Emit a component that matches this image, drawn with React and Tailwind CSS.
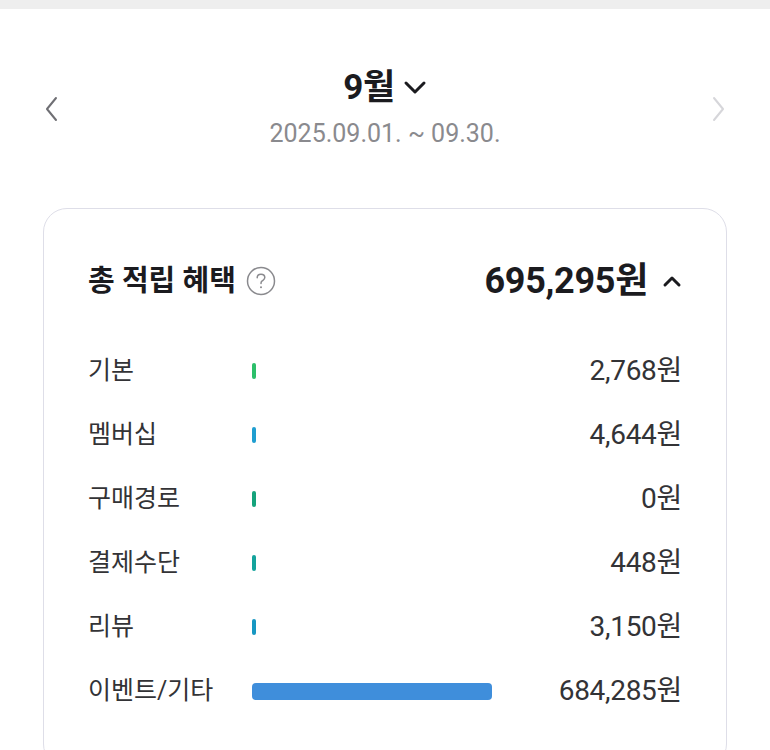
import React from 'react';

const rows = [
    { label: '기본', value: '2,768원', color: 'bg-[#2cbf6a]', width: 4 },
    { label: '멤버십', value: '4,644원', color: 'bg-[#1f9ed0]', width: 4 },
    { label: '구매경로', value: '0원', color: 'bg-[#15a37c]', width: 4 },
    { label: '결제수단', value: '448원', color: 'bg-[#14a39c]', width: 4 },
    { label: '리뷰', value: '3,150원', color: 'bg-[#1797c2]', width: 4 },
    { label: '이벤트/기타', value: '684,285원', color: 'bg-[#3f8edb]', width: 240 },
];

const App = () => {
    return (
        <div className="min-h-screen bg-white font-['Roboto','Noto_Sans_CJK_KR',sans-serif] text-[#1b1b1f]">
            {/* Top strip */}
            <div className="h-[9px] bg-[#eeeeee]" />

            {/* Month selector */}
            <header className="flex items-center justify-between px-[38px] pt-[59px]">
                <button className="p-1">
                    <svg width="20" height="28" viewBox="0 0 20 28" fill="none" stroke="#6f6f74" strokeWidth="2" strokeLinecap="round" strokeLinejoin="round">
                        <path d="M14 3 L5 14 L14 25" />
                    </svg>
                </button>
                <div className="flex flex-col items-center">
                    <div className="flex items-center gap-[8px]">
                        <span className="text-[35px] font-bold leading-[40px] tracking-[-0.5px]">9월</span>
                        <svg width="24" height="16" viewBox="0 0 24 16" fill="none" stroke="#1b1b1f" strokeWidth="3" strokeLinecap="round" strokeLinejoin="round">
                            <path d="M3 3 L12 12 L21 3" />
                        </svg>
                    </div>
                    <span className="mt-[11px] text-[25px] leading-[30px] text-[#8a8a8e]">2025.09.01. ~ 09.30.</span>
                </div>
                <button className="p-1">
                    <svg width="20" height="28" viewBox="0 0 20 28" fill="none" stroke="#d6d6da" strokeWidth="2" strokeLinecap="round" strokeLinejoin="round">
                        <path d="M6 3 L15 14 L6 25" />
                    </svg>
                </button>
            </header>

            {/* Benefit card */}
            <main className="mx-[43px] mt-[59px] rounded-[24px] border-[1.5px] border-[#dedee8] px-[44px] pt-[48px] pb-[60px]">
                <div className="flex items-center justify-between">
                    <div className="flex items-center gap-[10px]">
                        <h2 className="text-[29px] font-bold leading-[48px]">총 적립 혜택</h2>
                        <svg width="30" height="30" viewBox="0 0 30 30" fill="none">
                            <circle cx="15" cy="15" r="13.5" stroke="#8a8a8e" strokeWidth="1.5" />
                            <path d="M11.2 11.8 C11.2 9.6 13 8.2 15 8.2 C17.2 8.2 18.8 9.6 18.8 11.6 C18.8 13.6 17 14.2 15.8 15.2 C15.2 15.7 15 16.3 15 17.4" stroke="#8a8a8e" strokeWidth="1.5" strokeLinecap="round" />
                            <circle cx="15" cy="21.2" r="1" fill="#8a8a8e" />
                        </svg>
                    </div>
                    <div className="flex items-center gap-[14px]">
                        <span className="text-[36px] font-bold leading-[48px] tracking-[-0.3px]">695,295원</span>
                        <svg width="20" height="14" viewBox="0 0 20 14" fill="none" stroke="#1b1b1f" strokeWidth="3" strokeLinecap="round" strokeLinejoin="round">
                            <path d="M3 11 L10 4 L17 11" />
                        </svg>
                    </div>
                </div>

                <ul className="mt-[50px] flex flex-col gap-[32px]">
                    {rows.map((row) => (
                        <li key={row.label} className="flex items-center h-[32px]">
                            <span className="w-[164px] shrink-0 text-[25px] text-[#333336]">{row.label}</span>
                            <div className="flex-1 flex items-center">
                                <div
                                    className={`${row.color} ${row.width > 4 ? 'h-[17px] rounded-[4px]' : 'h-[16px] rounded-full'}`}
                                    style={{ width: row.width }}
                                />
                            </div>
                            <span className="text-[28px] text-[#333336] tracking-[-0.3px]">{row.value}</span>
                        </li>
                    ))}
                </ul>
            </main>
        </div>
    );
};

export default App;
